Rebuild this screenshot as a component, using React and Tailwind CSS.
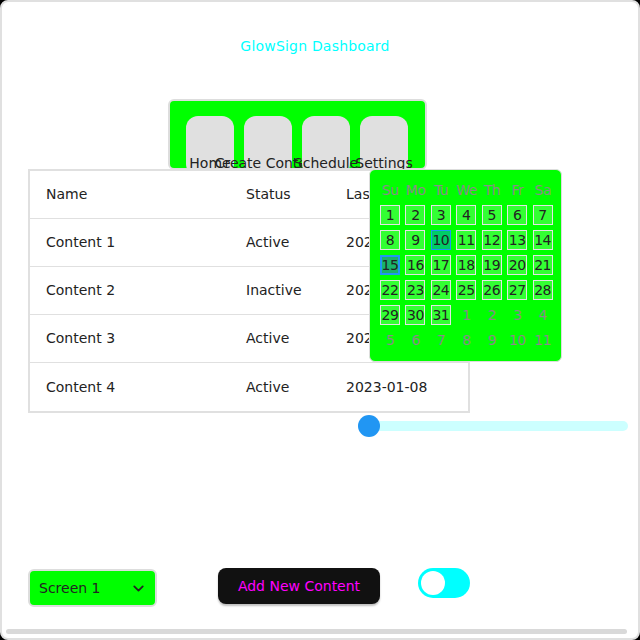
import { ChevronDown } from "lucide-react";

const navItems = ["Home", "Create Content", "Schedule", "Settings"];

const rows = [
  { name: "Content 1", status: "Active", date: "2023-01-01" },
  { name: "Content 2", status: "Inactive", date: "2023-01-03" },
  { name: "Content 3", status: "Active", date: "2023-01-05" },
  { name: "Content 4", status: "Active", date: "2023-01-08" },
];

const weekDays = ["Su", "Mo", "Tu", "We", "Th", "Fr", "Sa"];

const days = [
  ...Array.from({ length: 31 }, (_, i) => ({ n: i + 1, inMonth: true })),
  ...Array.from({ length: 11 }, (_, i) => ({ n: i + 1, inMonth: false })),
];

const Calendar = () => {
  return (
    <div className="absolute left-[367px] top-[167px] w-[193px] rounded-md border border-[#dddddd] bg-[#00ff00] pb-[11px] pl-[10px] pr-[8px] pt-[10px]">
      <div className="grid grid-cols-7 grid-rows-[20px_20px_20px_20px_20px_20px_20px] gap-x-[5px] gap-y-[5px]">
        {weekDays.map((d) => (
          <div key={d} className="flex h-5 items-center justify-center text-[14px] tracking-[-0.5px] text-[#8a8a8a]">
            {d}
          </div>
        ))}
        {days.map((day, i) => {
          if (!day.inMonth) {
            return (
              <div key={i} className="flex h-5 items-center justify-center text-[14px] tracking-[-0.5px] text-[#8a8a8a]">
                {day.n}
              </div>
            );
          }
          let cls = "border border-[#e4e4e4] bg-[#33ff33]";
          if (day.n === 10) cls = "border border-[#2196f3] bg-[#00cc66]";
          if (day.n === 15) cls = "border-2 border-[#2196f3] bg-[#19b36b]";
          return (
            <div key={i} className={`flex h-5 w-5 items-center justify-center text-[14px] tracking-[-0.5px] text-[#222222] ${cls}`}>
              {day.n}
            </div>
          );
        })}
      </div>
    </div>
  );
};

export default function App() {
  return (
    <div
      className="h-[640px] w-[640px] bg-black"
      style={{ fontFamily: '"DejaVu Sans", sans-serif' }}
    >
      <div className="relative flex h-full w-full flex-col rounded-lg border-2 border-[#e0e0e0] bg-white">
        <h1 className="mr-[10px] pt-[34px] text-center text-[14px] leading-5 tracking-[0.2px] text-[#00ffff]">
          GlowSign Dashboard
        </h1>

        <nav className="ml-[166px] mt-[43px] flex h-[71px] w-[259px] gap-[10px] rounded-md border-2 border-[#dddddd] bg-[#00ff00] pl-[16px] pt-[15px]">
          {navItems.map((item) => (
            <button
              key={item}
              className="flex h-[60px] w-[48px] shrink-0 justify-center rounded-xl bg-[#e0e0e0] pt-[37px] text-[14px] leading-5 whitespace-nowrap text-[#222222]"
            >
              {item}
            </button>
          ))}
        </nav>

        <div className="relative -mt-[1px] ml-[26px] w-[442px] border-2 border-[#e0e0e0] bg-white text-[14px] text-[#222222]">
          <div className="grid h-12 grid-cols-[200px_100px_1fr] items-center border-b border-[#e0e0e0] pl-[16px]">
            <span>Name</span>
            <span>Status</span>
            <span>Last Updated</span>
          </div>
          {rows.map((row, i) => (
            <div
              key={row.name}
              className={`grid h-12 grid-cols-[200px_100px_1fr] items-center pl-[16px] ${
                i < rows.length - 1 ? "border-b border-[#e0e0e0]" : ""
              }`}
            >
              <span>{row.name}</span>
              <span>{row.status}</span>
              <span>{row.date}</span>
            </div>
          ))}
        </div>

        <Calendar />

        <div className="relative ml-[356px] mt-[2px] flex h-[22px] w-[270px] items-center">
          <div className="h-[10px] w-full rounded-full bg-[#ccffff]" />
          <div className="absolute left-0 top-0 h-[22px] w-[22px] rounded-full bg-[#2196f3]" />
        </div>

        <div className="mt-auto flex items-start pl-[26px]">
          <div className="mt-px flex h-[38px] w-[129px] items-center justify-between rounded-md border-2 border-[#dddddd] bg-[#00ff00] pl-[9px] pr-[8px] text-[14px] text-[#222222]">
            <span>Screen 1</span>
            <ChevronDown size={17} strokeWidth={2.5} />
          </div>
          <button className="ml-[61px] h-[36px] w-[162px] rounded-lg bg-[#111111] text-[14px] text-[#ff00ff] shadow-[0_2px_2px_rgba(0,0,0,0.25)]">
            Add New Content
          </button>
          <div className="ml-[38px] flex h-[30px] w-[52px] items-center rounded-full bg-[#00ffff] pl-[3px]">
            <div className="h-6 w-6 rounded-full bg-white" />
          </div>
        </div>

        <div className="mb-[4px] ml-[4px] mt-[22px] h-[5px] w-[621px] rounded-full bg-[#d9d9d9]" />
      </div>
    </div>
  );
}
